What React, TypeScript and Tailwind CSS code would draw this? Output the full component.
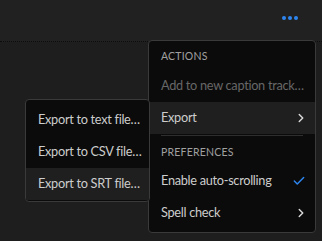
import { Check, ChevronRight } from "lucide-react";

const font = { fontFamily: '"Lato", "Open Sans", sans-serif' };

const MenuRow = ({
  label,
  active,
  disabled,
  right,
}: {
  label: string;
  active?: boolean;
  disabled?: boolean;
  right?: React.ReactNode;
}) => {
  return (
    <div
      className={`flex h-[32px] items-center justify-between whitespace-nowrap pl-[12px] pr-[7px] text-[12.75px] tracking-[-0.3px] ${
        active ? "bg-[#1f1f1f]" : ""
      } ${disabled ? "text-[#676767]" : "text-[#cdcdcd]"}`}
    >
      <span>{label}</span>
      {right}
    </div>
  );
};

export default function App() {
  return (
    <div
      className="relative h-[241px] w-[322px] overflow-hidden bg-[#1e1e1e]"
      style={font}
    >
      <div className="flex h-[42px] items-start justify-end border-b border-dotted border-[#0c0c0c] bg-[#212121] pr-[24px] pt-[16px]">
        <div className="flex gap-[2px]">
          <span className="h-[4px] w-[4px] rounded-full bg-[#2d86f0]" />
          <span className="h-[4px] w-[4px] rounded-full bg-[#2d86f0]" />
          <span className="h-[4px] w-[4px] rounded-full bg-[#2d86f0]" />
        </div>
      </div>

      {/* main menu */}
      <div className="absolute left-[148px] top-[40px] flex w-[168px] flex-col rounded-[4px] border border-[#3a3a3a] bg-[#0b0b0b] pb-[3px]">
        <div className="flex h-[29px] items-end pb-[5px] pl-[12px] text-[10.5px] tracking-[0.2px] text-[#a0a0a0]">
          ACTIONS
        </div>
        <MenuRow label="Add to new caption track…" disabled />
        <MenuRow
          label="Export"
          active
          right={<ChevronRight className="h-[14px] w-[14px] text-[#d8d8d8]" strokeWidth={2.5} />}
        />
        <div className="mx-[12px] mt-[1px] h-px bg-[#2e2e2e]" />
        <div className="flex h-[29px] items-center pl-[12px] pt-[4px] text-[10.5px] tracking-[0.2px] text-[#a0a0a0]">
          PREFERENCES
        </div>
        <MenuRow
          label="Enable auto-scrolling"
          right={<Check className="mr-[2px] h-[14px] w-[14px] text-[#2d86f0]" strokeWidth={2.5} />}
        />
        <MenuRow
          label="Spell check"
          right={<ChevronRight className="h-[14px] w-[14px] text-[#d8d8d8]" strokeWidth={2.5} />}
        />
      </div>

      {/* export submenu */}
      <div className="absolute left-[25px] top-[99px] flex w-[125px] flex-col rounded-[4px] border border-[#3a3a3a] bg-[#0b0b0b] pt-[4px] pb-px">
        <MenuRow label="Export to text file…" />
        <MenuRow label="Export to CSV file…" />
        <MenuRow label="Export to SRT file…" active />
      </div>
    </div>
  );
}
